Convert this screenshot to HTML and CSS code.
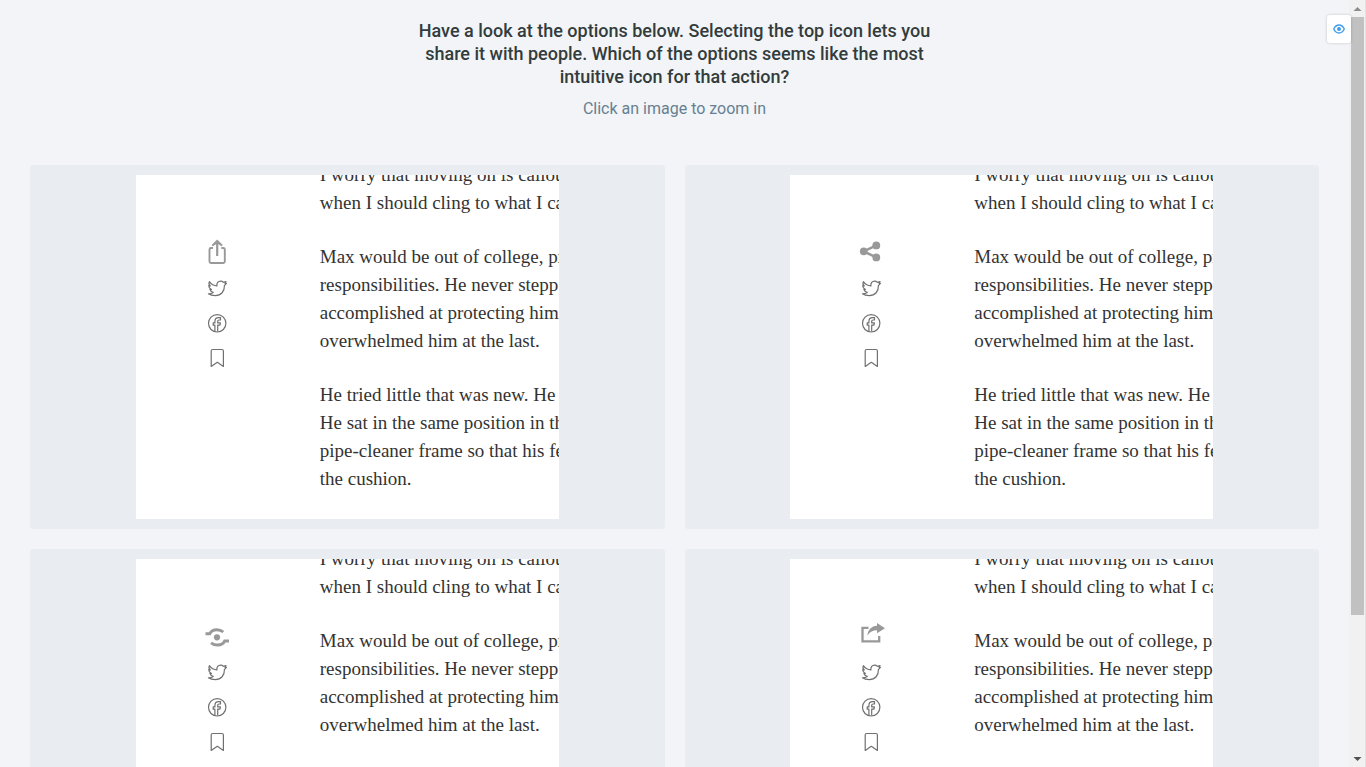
FILE: index.html
```
<!DOCTYPE html>
<html lang="en">
<head>
<meta charset="utf-8">
<title>Preference test</title>
<link rel="stylesheet" href="styles.css">
</head>
<body>
<svg class="defs" aria-hidden="true">
  <symbol id="share-up" viewBox="0 0 30 35">
    <path d="M11 13H9q-1.500 0-1.500 1.500v12q0 1.500 1.500 1.500h12.300q1.500 0 1.500-1.500v-12q0-1.500-1.500-1.500h-2" fill="none" stroke="#999" stroke-width="1.900"/>
    <path d="M15.200 21V8" fill="none" stroke="#999" stroke-width="2.200"/>
    <path d="M15.200 4.600l5.600 5.400-1.200 1.300-4.400-2.800-4.400 2.800L9.600 10z" fill="#999"/>
  </symbol>
  <symbol id="share-nodes" viewBox="0 0 30 35">
    <path d="M20.300 10.400L7.700 16.400l12.600 6" fill="none" stroke="#999" stroke-width="2.600"/>
    <g fill="#999"><circle cx="7.700" cy="16.400" r="3.800"/><circle cx="20.300" cy="10.400" r="3.900"/><circle cx="20.300" cy="22.400" r="3.900"/></g>
  </symbol>
  <symbol id="share-orbit" viewBox="0 0 30 35">
    <circle cx="15" cy="18.300" r="3.100" fill="#999"/>
    <path d="M3.500 14.800h4.200c1.300-2.600 3.800-4 7-4 2.500 0 4.800.7 6.600 2.200M27 22h-4.300c-1.300 2.600-3.800 4-7 4-2.500 0-4.800-.7-6.600-2.200" fill="none" stroke="#999" stroke-width="2.900"/>
  </symbol>
  <symbol id="share-out" viewBox="0 0 30 35">
    <path d="M12.500 8.800H6.500v13.600h16.700v-5.400" fill="none" stroke="#999" stroke-width="2.300"/>
    <path d="M21 4l8 5.200-8 5.100v-3c-4 0-7 1.500-9.600 5.200.5-5.600 4.200-9.400 9.600-9.700z" fill="#999"/>
  </symbol>
  <symbol id="bird" viewBox="0 0 30 35">
    <path d="M7.400 11.700c1.900 2.600 4.500 4.100 7.500 4.200-.4-2.900 1.300-4.800 3.700-4.800 1.200 0 2.100.4 2.800 1.200l2.600-.8-.9 1.900 1.300-.1-2 2.300c.3 5.700-3.400 10-9 10-2.800 0-5.100-.5-7-1.800 2.100.1 3.800-.4 4.900-1.500-1.800-.3-2.900-1.300-3.400-2.700h1.500c-1.700-1-2.700-2.200-2.700-4.100l1.600.5c-1.400-1.300-1.700-2.700-.9-4.300z" fill="none" stroke="#707070" stroke-width="1.200" stroke-linejoin="round"/>
  </symbol>
  <symbol id="facebook" viewBox="0 0 30 35">
    <circle cx="15.200" cy="18.300" r="8.700" fill="none" stroke="#707070" stroke-width="1.200"/>
    <path d="M12.900 26.500v-6.300h-1.700v-2.300h1.700v-1.500c0-2.500 1.400-3.700 3.600-3.700h2v2.300h-1.400c-1 0-1.400.4-1.400 1.300v1.600h2.700l-.4 2.300h-2.300v6.300" fill="none" stroke="#707070" stroke-width="1.200" stroke-linejoin="round"/>
  </symbol>
  <symbol id="bookmark" viewBox="0 0 30 35">
    <path d="M9.200 26.400V11q0-1.500 1.500-1.500h9.200q1.500 0 1.500 1.500v15.400l-6.100-4.100z" fill="none" stroke="#707070" stroke-width="1.200" stroke-linejoin="round"/>
  </symbol>
</svg>

<div class="viewport">
  <main class="page">
    <header class="intro">
      <h1 class="question">Have a look at the options below. Selecting the top icon lets you share it with people. Which of the options seems like the most intuitive icon for that action?</h1>
      <p class="hint">Click an image to zoom in</p>
    </header>

    <div class="options">
      <button class="option" type="button" aria-label="Option 1">
        <span class="shot">
          <span class="icons"><svg><use href="#share-up"/></svg><svg><use href="#bird"/></svg><svg><use href="#facebook"/></svg><svg><use href="#bookmark"/></svg></span>
          <span class="article">
            <span class="para">I worry that moving on is callous<br>when I should cling to what I can</span>
            <span class="para">Max would be out of college, pr<br>responsibilities. He never stepp<br>accomplished at protecting him<br>overwhelmed him at the last.</span>
            <span class="para">He tried little that was new. He<br>He sat in the same position in th<br>pipe-cleaner frame so that his fe<br>the cushion.</span>
          </span>
        </span>
      </button>
      <button class="option" type="button" aria-label="Option 2">
        <span class="shot">
          <span class="icons"><svg><use href="#share-nodes"/></svg><svg><use href="#bird"/></svg><svg><use href="#facebook"/></svg><svg><use href="#bookmark"/></svg></span>
          <span class="article">
            <span class="para">I worry that moving on is callous<br>when I should cling to what I can</span>
            <span class="para">Max would be out of college, pr<br>responsibilities. He never stepp<br>accomplished at protecting him<br>overwhelmed him at the last.</span>
            <span class="para">He tried little that was new. He<br>He sat in the same position in th<br>pipe-cleaner frame so that his fe<br>the cushion.</span>
          </span>
        </span>
      </button>
      <button class="option" type="button" aria-label="Option 3">
        <span class="shot">
          <span class="icons"><svg><use href="#share-orbit"/></svg><svg><use href="#bird"/></svg><svg><use href="#facebook"/></svg><svg><use href="#bookmark"/></svg></span>
          <span class="article">
            <span class="para">I worry that moving on is callous<br>when I should cling to what I can</span>
            <span class="para">Max would be out of college, pr<br>responsibilities. He never stepp<br>accomplished at protecting him<br>overwhelmed him at the last.</span>
          </span>
        </span>
      </button>
      <button class="option" type="button" aria-label="Option 4">
        <span class="shot">
          <span class="icons"><svg><use href="#share-out"/></svg><svg><use href="#bird"/></svg><svg><use href="#facebook"/></svg><svg><use href="#bookmark"/></svg></span>
          <span class="article">
            <span class="para">I worry that moving on is callous<br>when I should cling to what I can</span>
            <span class="para">Max would be out of college, pr<br>responsibilities. He never stepp<br>accomplished at protecting him<br>overwhelmed him at the last.</span>
          </span>
        </span>
      </button>
    </div>
  </main>

  <div class="scrollbar" aria-hidden="true">
    <svg class="arrow" viewBox="0 0 15 17"><path d="M7.500 7L11.500 11h-8z" fill="#8c8c8c"/></svg>
    <div class="track"><div class="thumb"></div></div>
    <svg class="arrow" viewBox="0 0 15 17"><path d="M3.500 7h8l-4 4z" fill="#505050"/></svg>
  </div>

  <button class="preview" type="button" aria-label="Preview">
    <svg viewBox="0 0 12 10"><path d="M.7 5C2 2.300 3.800 1 6 1s4 1.300 5.300 4C10 7.700 8.200 9 6 9S2 7.700.7 5z" fill="none" stroke="#3b9df0" stroke-width="1.300"/><circle cx="6" cy="5" r="2" fill="#3b9df0"/></svg>
  </button>
</div>
</body>
</html>
```
FILE: styles.css
```
* {
  box-sizing: border-box;
}

body {
  margin: 0;
  background: #f2f4f8;
  font-family: Roboto, sans-serif;
}

button {
  border: 0;
  font: inherit;
  color: inherit;
  cursor: pointer;
}

.defs {
  display: none;
}

.viewport {
  position: relative;
  display: flex;
  height: 100vh;
  overflow: hidden;
}

.page {
  flex: 1;
  min-width: 0;
  overflow: hidden;
}

.intro {
  display: flex;
  flex-direction: column;
  align-items: center;
  padding: 19px 20px 45px;
  text-align: center;
}

.question {
  max-width: 530px;
  margin: 0;
  font-size: 18px;
  font-weight: 500;
  line-height: 23px;
  color: #323c3c;
}

.hint {
  margin: 9px 0 0;
  font-size: 16px;
  line-height: 23px;
  color: #678091;
}

.options {
  display: grid;
  grid-template-columns: 1fr 1fr;
  gap: 20px;
  padding: 0 30px 30px;
}

.option {
  display: flex;
  justify-content: center;
  padding: 10px;
  border-radius: 3px;
  background: #e9edf2;
}

.shot {
  display: flex;
  flex: 0 1 423px;
  height: 344px;
  overflow: hidden;
  background: #fff;
  text-align: left;
}

.icons {
  display: flex;
  flex: none;
  flex-direction: column;
  width: 184px;
  padding: 60px 0 0 66px;
}

.icons svg {
  width: 30px;
  height: 35px;
}

.article {
  display: flex;
  flex: none;
  flex-direction: column;
  gap: 26px;
  margin-top: -14px;
  font-family: Charter, "Liberation Serif", serif;
  font-size: 19px;
  line-height: 28px;
  color: #333;
  white-space: nowrap;
}

.scrollbar {
  display: flex;
  flex: none;
  flex-direction: column;
  width: 17px;
  padding: 0 1px;
  border-right: 1px solid #e2e2e2;
  background: #f1f1f1;
}

.arrow {
  width: 15px;
  height: 17px;
}

.track {
  flex: 1;
}

.thumb {
  width: 13px;
  height: calc(82% - 3px);
  margin-left: 1px;
  background: #c1c1c1;
}

.preview {
  position: absolute;
  top: 15px;
  right: 15px;
  display: flex;
  align-items: center;
  justify-content: center;
  width: 24px;
  height: 28px;
  padding: 0;
  border-radius: 3px;
  background: #fff;
  box-shadow: 0 0 3px rgba(0, 0, 0, 0.2);
}

.preview svg {
  width: 12px;
  height: 10px;
}
```
